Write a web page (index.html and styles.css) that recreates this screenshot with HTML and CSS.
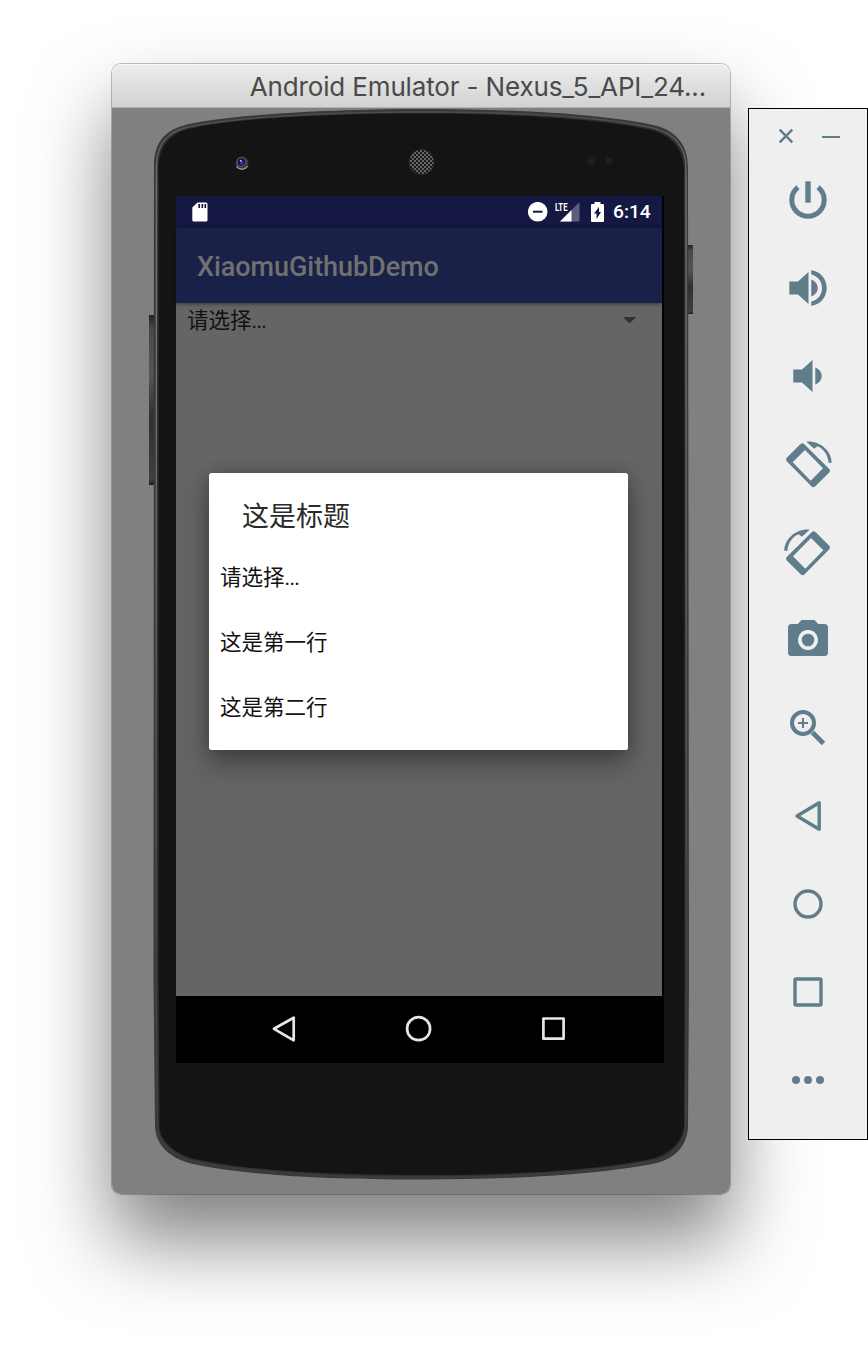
FILE: index.html
```html
<!DOCTYPE html>
<html lang="zh-CN">
<head>
<meta charset="utf-8">
<title>Android Emulator</title>
<link rel="stylesheet" href="styles.css">
</head>
<body>
<main class="desktop">
  <section class="window">
    <header class="titlebar"><span class="window-title">Android Emulator - Nexus_5_API_24...</span></header>
    <div class="stage">
      <svg class="device" viewBox="112 108 618 1086">
        <defs>
          <linearGradient id="key" x1="0" y1="0" x2="0" y2="1">
            <stop offset="0" stop-color="#222"/><stop offset=".08" stop-color="#484848"/><stop offset=".35" stop-color="#555"/><stop offset=".6" stop-color="#303030"/><stop offset=".97" stop-color="#404040"/><stop offset="1" stop-color="#181818"/>
          </linearGradient>
          <linearGradient id="rim" x1="0" y1="0" x2="0" y2="1">
            <stop offset="0" stop-color="#4c4c4e"/><stop offset=".07" stop-color="#77777a"/><stop offset=".4" stop-color="#66666c"/><stop offset=".8" stop-color="#444"/><stop offset="1" stop-color="#3d3d3d"/>
          </linearGradient>
          <pattern id="mesh" width="4" height="4" patternUnits="userSpaceOnUse">
            <rect width="4" height="4" fill="#6b6b6b"/><circle cx="1" cy="1" r="1.150" fill="#161616"/><circle cx="3" cy="3" r="1.150" fill="#161616"/>
          </pattern>
        </defs>
        <rect x="149" y="315" width="6" height="170" fill="url(#key)"/>
        <rect x="687" y="245" width="6" height="69" fill="url(#key)"/>
        <path d="M154 165C154 143 165 131 182 126C220 115 330 109 421 109C515 109 602 114 653 125C676 130 688 145 688 167L689 980L688 1127C687 1145 676 1158 657 1163C602 1174 520 1179.500 421 1179.500C320 1179.500 245 1175 193 1164C171 1159 156 1146 155 1127L153.500 980Z" fill="#39393a"/>
        <path d="M156.500 166C156.500 146 167 133 183 128.500C223 117.500 330 112 421 112C514 112 601 117 651 127.500C674 133 686 147 686 168L686.500 980L685.500 1127C684.500 1142 674 1155 655 1160.500C601 1171.500 520 1177 421 1177C320 1177 246 1172 195 1161.500C173 1156 158 1143 157.500 1127L156 980Z" fill="#303031" stroke="url(#rim)" stroke-width="1.300"/>
        <path d="M158.500 169C158.500 149 168 134.500 187 129.500C225 118.500 330 113.500 421 113.500C513 113.500 600 119 649 129.500C672 134.500 684 150 684 170L684.500 980L684 1126C683 1140 672 1153 653 1158.500C600 1170 519 1175 421 1175C321 1175 247 1170 197 1159.500C174 1154 159.500 1141 159.500 1126L158.500 980Z" fill="#141414"/>
        <circle cx="242" cy="163" r="6.500" fill="#383838"/><path d="M236.500 166a6.300 6.300 0 0 0 11 0" stroke="#999" stroke-width="1.300" fill="none"/>
        <circle cx="241.500" cy="162" r="4.800" fill="#666"/><circle cx="241.500" cy="162" r="3.900" fill="#14144b"/><circle cx="242" cy="163" r="1.900" fill="#3434b0"/><circle cx="240.800" cy="160.700" r="1" fill="#b8b8cc"/>
        <circle cx="421.500" cy="162" r="12.500" fill="url(#mesh)" stroke="#292929"/>
        <circle cx="591" cy="160.500" r="5" fill="#1d1b1b"/><circle cx="592" cy="161.500" r="1.500" fill="#2b2222"/><circle cx="609" cy="160.500" r="3.500" fill="#201e1e"/>
      </svg>
      <div class="screen">
        <div class="statusbar">
          <svg class="sd" width="16" height="20" viewBox="0 0 16 20"><path d="M5.500.5H14a1.500 1.500 0 0 1 1.500 1.500V18a1.500 1.500 0 0 1-1.500 1.500H1.800A1.500 1.500 0 0 1 .3 18V5.600z" fill="#fff"/><path d="M7.200 2v4M10.300 2v4M13.300 2v4" stroke="#141842" stroke-width="1.700"/></svg>
          <svg class="dnd" width="20" height="20" viewBox="0 0 20 20"><circle cx="9.700" cy="9.700" r="9.800" fill="#fff"/><path d="M5 9.700h9.500" stroke="#141842" stroke-width="2"/></svg>
          <svg class="signal" width="25" height="21" viewBox="0 0 25 21"><path d="M24.500 0v19.500H5z" fill="#5b5e7b"/><path d="M16.500 8v11.500H5z" fill="#fff"/><text class="lte" x="0" y="8.700" textLength="12.500" lengthAdjust="spacingAndGlyphs">LTE</text></svg>
          <svg class="battery" width="13" height="20" viewBox="0 0 13 20"><path d="M3.500 0h6v2H12a1 1 0 0 1 1 1v16a1 1 0 0 1-1 1H1a1 1 0 0 1-1-1V3a1 1 0 0 1 1-1h2.500z" fill="#fff"/><path d="M8 5v5H10l-4.500 7v-5.500H3z" fill="#141842"/></svg>
          <span class="clock">6:14</span>
        </div>
        <div class="appbar">XiaomuGithubDemo</div>
        <div class="content">
          <div class="spinner"><span>请选择<span class="dots">...</span></span><svg width="13" height="7" viewBox="0 0 13 7"><path d="M0 0h13L6.500 6.500z" fill="#303030"/></svg></div>
        </div>
        <div class="navbar">
          <svg width="30" height="30" viewBox="-15 -15 30 30"><path d="M-10-.2L9.700-11.300V11.300z"/></svg>
          <svg width="30" height="30" viewBox="-15 -15 30 30"><circle cx="-.4" cy="-.3" r="11.500"/></svg>
          <svg width="30" height="30" viewBox="-15 -15 30 30"><rect x="-10.600" y="-10.500" width="20.200" height="20.200"/></svg>
        </div>
        <div class="dialog">
          <h1 class="dialog-title">这是标题</h1>
          <ul class="options"><li>请选择<span class="dots">...</span></li><li>这是第一行</li><li>这是第二行</li></ul>
        </div>
      </div>
    </div>
  </section>
  <aside class="toolbar">
    <div class="window-controls">
      <svg width="18" height="18" viewBox="-9 -9 18 18"><path d="M-6.300-6.300L6.300 6.300M6.300-6.300L-6.300 6.300" class="line thin"/></svg>
      <svg width="18" height="18" viewBox="-9 -9 18 18"><path d="M-9 1H9" class="line hair"/></svg>
    </div>
    <div class="tool"><svg viewBox="-32 -32 64 64"><path d="M-10-12.800A16.200 16.200 0 1 0 10-12.800" class="line power"/><rect x="-2.700" y="-18.700" width="5.400" height="21.400"/></svg></div>
    <div class="tool"><svg viewBox="-32 -32 64 64"><path d="M-18.700-6.500h8.700L.5-16V16L-10 6.500h-8.700zM3.300-8.500C7.500-6.800 9.700-3.800 9.700 0S7.500 6.800 3.300 8.500zM3.300-18C12.700-16.300 18.700-9 18.700 0S12.700 16.300 3.300 18V13.600C10 12 14 6.500 14 0S10-12 3.300-13.600z"/></svg></div>
    <div class="tool"><svg viewBox="-32 -32 64 64"><path d="M-14.700-6.500h8.700L4.500-16V16L-6 6.500h-8.700zM7.300-8.500C11.500-6.800 13.700-3.800 13.700 0S11.500 6.800 7.300 8.500z"/></svg></div>
    <div class="tool"><svg viewBox="-32 -32 64 64"><g id="rotate"><path fill-rule="evenodd" d="M-7.500-20q1.800-1.500 3.500 0L21.300 5q1.500 1.700 0 3.400L7 22.600q-1.700 1.500-3.400 0L-21.300-2.700q-1.500-1.800 0-3.500zM-3-14L-15.300-1.700 2.700 16.700 15 4.300z"/><path d="M-1.500-22.300C12-23.500 23.500-13 23.700-1.300H20.600C20-9 15.500-15.300 9.500-17.800L6-15.200z"/></g></svg></div>
    <div class="tool"><svg viewBox="-32 -32 64 64"><use href="#rotate" transform="scale(-1 1)"/></svg></div>
    <div class="tool"><svg viewBox="-32 -32 64 64"><path fill-rule="evenodd" d="M-6.500-20h13l3.700 4H16.500a3.500 3.500 0 0 1 3.500 3.500V12.500a3.500 3.500 0 0 1-3.500 3.500H-16.500a3.500 3.500 0 0 1-3.500-3.500V-12.500a3.500 3.500 0 0 1 3.500-3.500h6.300zM0-10a10 10 0 1 0 .01 0z"/><circle r="6.300"/></svg></div>
    <div class="tool"><svg viewBox="-32 -32 64 64"><circle cx="-5" cy="-5" r="11" class="line lens"/><path d="M-10-5H0M-5-10V0" class="line hair"/><path d="M4.500 4.500L15.500 15.500" class="line handle"/></svg></div>
    <div class="tool"><svg viewBox="-32 -32 64 64"><path d="M-11 0L11.200-13.200V13.200z" class="line nav"/></svg></div>
    <div class="tool"><svg viewBox="-32 -32 64 64"><circle r="13" class="line nav"/></svg></div>
    <div class="tool"><svg viewBox="-32 -32 64 64"><rect x="-13" y="-13" width="26" height="26" rx="1" class="line nav"/></svg></div>
    <div class="tool"><svg viewBox="-32 -32 64 64"><circle cx="-12" r="4"/><circle r="4"/><circle cx="12" r="4"/></svg></div>
  </aside>
</main>
</body>
</html>
```
FILE: styles.css
```css
* { box-sizing: border-box; }
body { margin: 0; background: #fff; }
svg { display: block; flex: none; }
.desktop { display: flex; align-items: flex-start; width: 868px; height: 1354px; padding: 64px 0 0 112px; overflow: hidden; }
.window { flex: none; width: 618px; height: 1130px; border-radius: 9px; box-shadow: 0 0 0 1px rgba(0,0,0,.24), 0 46px 80px rgba(0,0,0,.5); }
.titlebar { display: flex; align-items: center; justify-content: flex-end; height: 44px; padding: 2px 24px 0 0; border-radius: 9px 9px 0 0; border-bottom: 1px solid #b3b3b3; background: linear-gradient(#ededed, #d2d2d2); box-shadow: inset 0 1px #f7f7f7; }
.window-title { font: 400 26px/32px Inter, Roboto, sans-serif; letter-spacing: -.15px; color: #4a4a4a; white-space: nowrap; }
.stage { position: relative; height: 1086px; padding: 88px 0 0 64px; background: #808080; border-radius: 0 0 9px 9px; }
.device { position: absolute; inset: 0; width: 618px; height: 1086px; }
.screen { position: relative; width: 488px; height: 867px; background: #000; font-family: Roboto, "Noto Sans CJK SC", sans-serif; }
.statusbar { display: flex; align-items: center; width: 486px; height: 32px; padding: 0 11px 0 16px; background: #141842; }
.dnd { margin-left: auto; }
.signal { margin-left: 7px; }
.battery { margin-left: 11px; }
.lte { font: 700 10.500px Roboto, sans-serif; fill: #fff; }
.clock { width: 38px; margin-left: 9px; font-size: 19.200px; font-weight: 500; line-height: 34px; color: #fff; }
.appbar { position: relative; width: 486px; height: 75px; padding-left: 21px; background: #1a2148; font-size: 27px; font-weight: 500; line-height: 79px; letter-spacing: -.06px; color: #707071; box-shadow: 0 1px 4px rgba(0,0,0,.45); }
.content { width: 486px; height: 693px; background: #656565; }
.spinner { display: flex; align-items: center; justify-content: space-between; height: 35px; padding: 0 26px 0 11px; font-size: 21.500px; line-height: 35px; color: #111; }
.dots { letter-spacing: -.8px; }
.navbar { display: flex; align-items: center; justify-content: center; gap: 105px; width: 486px; height: 66px; }
.navbar svg { fill: none; stroke: #e6e6e6; stroke-width: 2.700; stroke-linejoin: round; }
.dialog { position: absolute; left: 33px; top: 277px; width: 419px; height: 277px; padding-top: 24px; border-radius: 2.500px; background: #fff; box-shadow: 0 14px 28px rgba(0,0,0,.34), 0 0 16px rgba(0,0,0,.2); }
.dialog-title { margin: 0; padding-left: 33px; font-size: 27px; font-weight: 400; line-height: 40px; color: #2a2a2a; }
.options { margin: 8px 0 0; padding: 0; list-style: none; }
.options li { height: 65px; padding-left: 11px; font-size: 21.500px; line-height: 65px; color: #111; }
.toolbar { flex: none; position: relative; width: 120px; height: 1032px; margin: 44px 0 0 18px; border: 1px solid #000; background: #efefef; }
.window-controls { display: flex; gap: 27px; height: 47px; padding: 18px 0 0 28px; }
.tool { display: flex; align-items: center; justify-content: center; height: 88px; }
.tool svg { width: 64px; height: 64px; fill: #607d8b; }
.toolbar .line { fill: none; stroke: #607d8b; }
.toolbar .thin { stroke-width: 2.500; }
.toolbar .hair { stroke-width: 2; }
.toolbar .power { stroke-width: 5; }
.toolbar .lens { stroke-width: 4; }
.toolbar .handle { stroke-width: 4.700; }
.toolbar .nav { stroke-width: 3.400; stroke-linejoin: round; }
```
